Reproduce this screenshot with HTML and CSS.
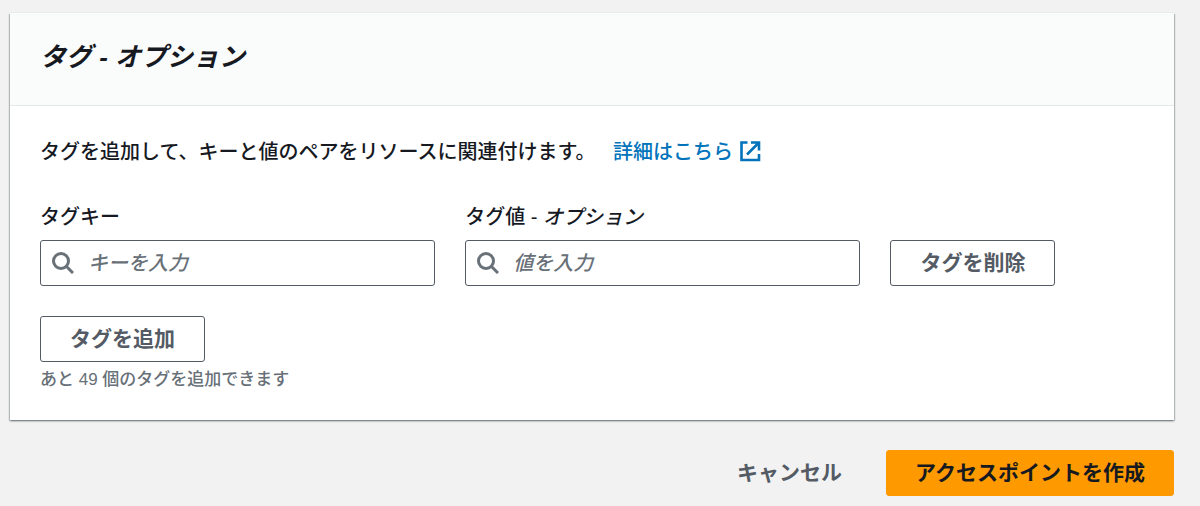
FILE: index.html
```html
<!DOCTYPE html>
<html lang="ja">
<head>
<meta charset="utf-8">
<title>タグ - オプション</title>
<link rel="stylesheet" href="styles.css">
</head>
<body>
<form class="page">
  <section class="panel">
    <header class="panel-header"><h2 class="panel-title">タグ - オプション</h2></header>
    <div class="panel-body">
      <p class="description">タグを追加して、キーと値のペアをリソースに関連付けます。
        <a class="link" href="#">詳細はこちら
          <svg class="external" viewBox="0 0 22 22" aria-hidden="true"><path d="M8.500 2.500H2.500v17.500h17.500v-6M12 2.500h8v8M19.500 3 8 14.500"/></svg></a></p>
      <div class="tag-row">
        <div class="field">
          <label class="label" for="key">タグキー</label>
          <div class="search">
            <svg class="search-icon" viewBox="0 0 22 22" aria-hidden="true"><circle cx="9" cy="9" r="7.5"/><path d="m14 14 7 7"/></svg>
            <input class="input" id="key" type="text" placeholder="キーを入力">
          </div>
        </div>
        <div class="field">
          <label class="label" for="value">タグ値 - <em>オプション</em></label>
          <div class="search">
            <svg class="search-icon" viewBox="0 0 22 22" aria-hidden="true"><circle cx="9" cy="9" r="7.5"/><path d="m14 14 7 7"/></svg>
            <input class="input" id="value" type="text" placeholder="値を入力">
          </div>
        </div>
        <button class="button" type="button">タグを削除</button>
      </div>
      <button class="button" type="button">タグを追加</button>
      <p class="hint">あと 49 個のタグを追加できます</p>
    </div>
  </section>
  <footer class="actions">
    <button class="button button-link" type="button">キャンセル</button>
    <button class="button button-primary" type="button">アクセスポイントを作成</button>
  </footer>
</form>
</body>
</html>
```

FILE: styles.css
```css
* { box-sizing: border-box; }
body {
  margin: 0;
  background: #f2f2f2;
  color: #16191f;
  font-family: "Liberation Sans", "Noto Sans CJK JP", sans-serif;
  font-size: 20px;
  font-weight: 500;
  line-height: 30px;
}
.page { padding: 13px 26px 10px 10px; }
.panel {
  background: #fff;
  box-shadow: 0 1px 2px rgba(0, 28, 36, 0.4), 1px 1px 1px rgba(0, 28, 36, 0.15), -1px 1px 1px rgba(0, 28, 36, 0.15);
}
.panel-header { padding: 24px 30px 28px; background: #fafbfb; border-bottom: 1px solid #e6e9e9; }
.panel-title { margin: 0; font-size: 26px; line-height: 40px; font-style: italic; font-weight: 700; }
.panel-body { padding: 31px 30px 27px; }
.description { margin: 0 0 35px; }
.link { margin-left: 12px; color: #0073bb; text-decoration: none; }
.external { width: 22px; height: 22px; vertical-align: -3px; fill: none; stroke: currentColor; stroke-width: 2.6; }
.tag-row { display: grid; grid-template-columns: 396fr 396fr 254fr; gap: 30px; align-items: end; justify-items: start; margin-bottom: 30px; }
.field { width: 100%; }
.label { display: block; margin-bottom: 8px; }
.search { display: flex; align-items: center; gap: 14px; height: 46px; padding: 0 11px; border: 1px solid #545b64; border-radius: 3px; }
.search-icon { width: 22px; height: 22px; flex: none; fill: none; stroke: #687078; stroke-width: 3; }
.input { flex: 1; min-width: 0; padding: 0; border: 0; outline: 0; background: none; color: inherit; font: inherit; }
.input::placeholder { color: #687078; font-style: italic; opacity: 1; }
.button { height: 46px; padding: 0 29px; border: 1px solid #545b64; border-radius: 3px; background: #fff; color: #545b64; font: inherit; font-size: 21px; font-weight: 700; }
.hint { margin: 5px 0 0; color: #687078; font-size: 17px; line-height: 26px; }
.actions { display: flex; justify-content: flex-end; gap: 14px; margin-top: 30px; }
.button-link { border-color: transparent; background: transparent; }
.button-primary { padding: 0 28px; border-color: #ff9900; background: #ff9900; color: #16191f; }
```
